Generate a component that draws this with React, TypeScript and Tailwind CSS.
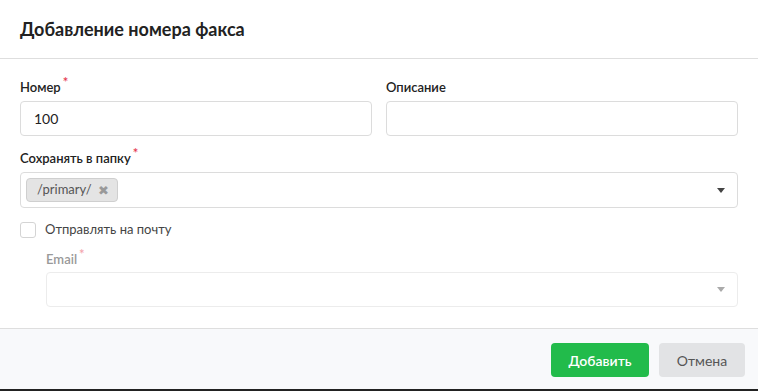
import React, { useState } from 'react';

function Caret({ light }: { light?: boolean }) {
  return (
    <svg width="8" height="5" viewBox="0 0 8 5" className={light ? 'text-[#aaa]' : 'text-[#444]'}>
      <path d="M0 0h8L4 5z" fill="currentColor" />
    </svg>
  );
}

function Label({ text, required, muted, mb = 'mb-[5px]' }: { text: string; required?: boolean; muted?: boolean; mb?: string }) {
  return (
    <div className={`h-[18px] ${mb} text-[13px] leading-[18px] font-semibold ${muted ? 'text-[#999]' : 'text-[#222]'}`}>
      {text}
      {required && <span className={`relative -top-[5px] ml-[2px] text-[13px] ${muted ? 'text-[#f3a5ad]' : 'text-[#e5394d]'}`}>*</span>}
    </div>
  );
}

export default function App() {
  const [number, setNumber] = useState('100');
  const [desc, setDesc] = useState('');
  const [mail, setMail] = useState(false);

  return (
    <div className="w-[758px] h-[391px] bg-white flex flex-col font-['Lato','Noto_Sans',sans-serif] text-[#333]">
      <div className="h-[59px] shrink-0 border-b border-[#dedede] px-5 flex items-center">
        <h2 className="text-[18px] font-bold text-[#222]">Добавление номера факса</h2>
      </div>

      <div className="flex-1 px-5 pt-[19px]">
        <div className="grid grid-cols-2 gap-[14px]">
          <div>
            <Label text="Номер" required />
            <input
              value={number}
              onChange={(e) => setNumber(e.target.value)}
              className="w-full h-[35px] px-[13px] rounded-[4px] border border-[#dcdcdc] text-[14px] text-[#222] outline-none"
            />
          </div>
          <div>
            <Label text="Описание" />
            <input
              value={desc}
              onChange={(e) => setDesc(e.target.value)}
              className="w-full h-[35px] px-[13px] rounded-[4px] border border-[#dcdcdc] text-[14px] text-[#222] outline-none"
            />
          </div>
        </div>

        <div className="mt-[13px]">
          <Label text="Сохранять в папку" required />
          <div className="h-[36px] rounded-[4px] border border-[#dcdcdc] flex items-center pl-[5px] pr-[12px]">
            <span className="h-[24px] pl-[10px] pr-[8px] rounded-[4px] bg-[#e4e4e4] border border-[#cfcfcf] flex items-center gap-[6px] text-[13px] text-[#555]">
              /primary/
              <span className="text-[13px] text-[#999] leading-none">✖</span>
            </span>
            <span className="flex-1" />
            <Caret />
          </div>
        </div>

        <label className="mt-[12px] flex items-center gap-[9px] cursor-pointer">
          <input type="checkbox" checked={mail} onChange={() => setMail(!mail)} className="sr-only" />
          <span className="w-[16px] h-[16px] rounded-[3px] border border-[#d4d4d4] bg-white" />
          <span className="text-[13px] text-[#444]">Отправлять на почту</span>
        </label>

        <div className="ml-[26px] mt-[10px]">
          <Label text="Email" required muted mb="mb-[4px]" />
          <div className="h-[35px] rounded-[4px] border border-[#ececec] flex items-center justify-end pr-[12px]">
            <Caret light />
          </div>
        </div>
      </div>

      <div className="h-[63px] shrink-0 border-t border-[#dedede] bg-[#f8f9fb] flex items-center justify-end gap-[10px] px-[13px] pt-[2px] border-b-2 border-b-[#222]">
        <button className="h-[34px] w-[98px] rounded-[4px] bg-[#22bb4b] text-white text-[14px] font-semibold">Добавить</button>
        <button className="h-[34px] w-[86px] rounded-[4px] bg-[#e2e3e5] text-[#555] text-[14px]">Отмена</button>
      </div>
    </div>
  );
}
